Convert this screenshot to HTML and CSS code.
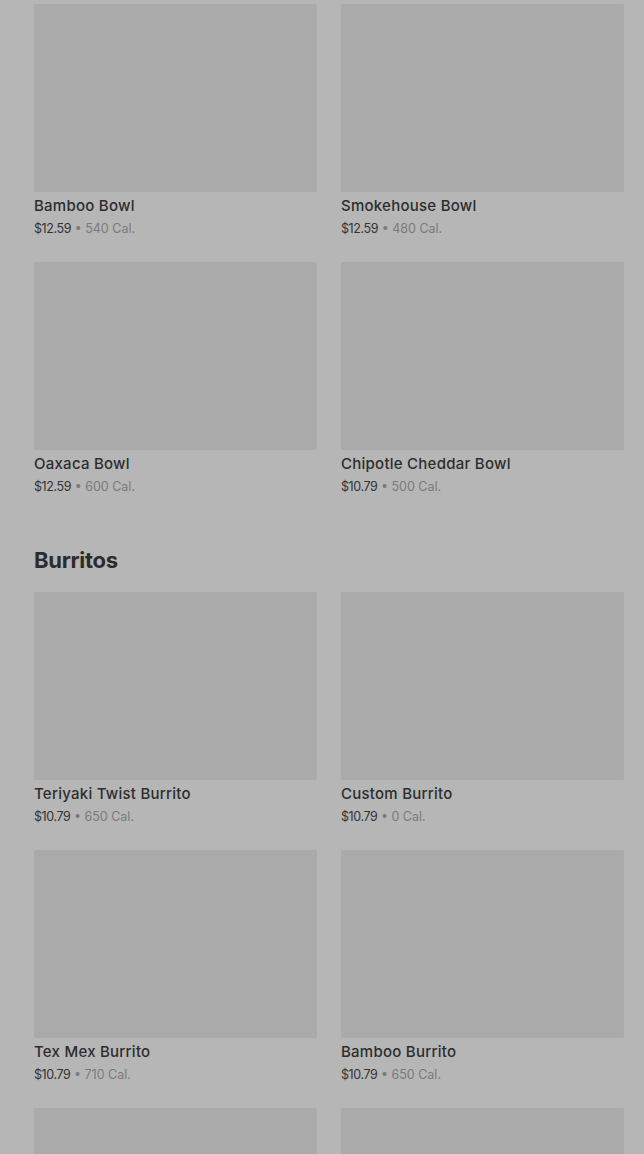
FILE: index.html
```html
<!DOCTYPE html>
<html>
<head>
  <title>Menu</title>
  <link rel="stylesheet" href="styles.css">
</head>
<body>
  <div class="menu">
    <section class="menu-section">
      <div class="item-grid">
        <div class="item">
          <div class="item-image"></div>
          <div class="item-name">Bamboo Bowl</div>
          <div class="item-meta"><span class="price">$12.59</span> • 540 Cal.</div>
        </div>
        <div class="item">
          <div class="item-image"></div>
          <div class="item-name">Smokehouse Bowl</div>
          <div class="item-meta"><span class="price">$12.59</span> • 480 Cal.</div>
        </div>
        <div class="item">
          <div class="item-image"></div>
          <div class="item-name">Oaxaca Bowl</div>
          <div class="item-meta"><span class="price">$12.59</span> • 600 Cal.</div>
        </div>
        <div class="item">
          <div class="item-image"></div>
          <div class="item-name">Chipotle Cheddar Bowl</div>
          <div class="item-meta"><span class="price">$10.79</span> • 500 Cal.</div>
        </div>
      </div>
    </section>

    <section class="menu-section">
      <h2>Burritos</h2>
      <div class="item-grid">
        <div class="item">
          <div class="item-image"></div>
          <div class="item-name">Teriyaki Twist Burrito</div>
          <div class="item-meta"><span class="price">$10.79</span> • 650 Cal.</div>
        </div>
        <div class="item">
          <div class="item-image"></div>
          <div class="item-name">Custom Burrito</div>
          <div class="item-meta"><span class="price">$10.79</span> • 0 Cal.</div>
        </div>
        <div class="item">
          <div class="item-image"></div>
          <div class="item-name">Tex Mex Burrito</div>
          <div class="item-meta"><span class="price">$10.79</span> • 710 Cal.</div>
        </div>
        <div class="item">
          <div class="item-image"></div>
          <div class="item-name">Bamboo Burrito</div>
          <div class="item-meta"><span class="price">$10.79</span> • 650 Cal.</div>
        </div>
        <div class="item">
          <div class="item-image"></div>
        </div>
        <div class="item">
          <div class="item-image"></div>
        </div>
      </div>
    </section>
  </div>
</body>
</html>
```

FILE: styles.css
```css
body {
  margin: 0;
  background-color: #b6b6b6;
  font-family: Inter, "Liberation Sans", Arial, sans-serif;
  color: #2b2b2b;
}

.menu {
  padding: 4px 20px 0 34px;
}

.menu-section {
  margin-bottom: 47px;
}

h2 {
  margin: 0 0 16px 0;
  font-size: 22px;
  line-height: 32px;
  font-weight: 700;
  letter-spacing: -0.3px;
  color: #2c2c2c;
}

.item-grid {
  display: grid;
  grid-template-columns: 1fr 1fr;
  column-gap: 24px;
  row-gap: 23px;
}

.item-image {
  height: 188px;
  background-color: #aaaaaa;
  border-radius: 2px;
}

.item-name {
  margin-top: 3px;
  font-size: 15px;
  line-height: 22px;
  font-weight: 500;
  letter-spacing: 0.25px;
  color: #2d2d2d;
}

.item-meta {
  margin-top: 2px;
  font-size: 12.5px;
  line-height: 20px;
  color: #7a7a7a;
}

.price {
  color: #333333;
  letter-spacing: -0.4px;
}
```
